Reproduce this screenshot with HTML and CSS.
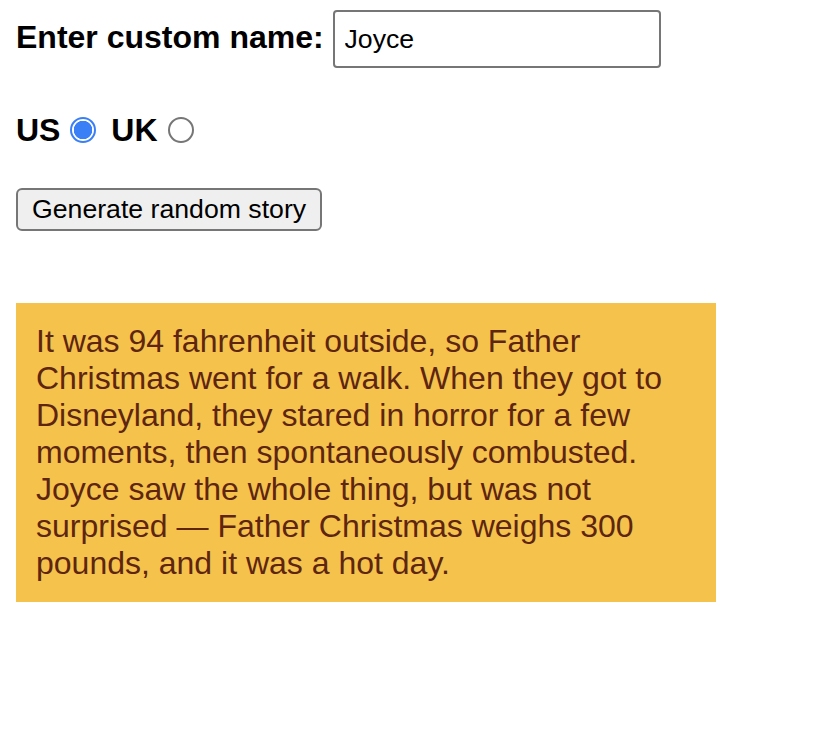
FILE: index.html
```html
<!DOCTYPE html>
<html lang="en">
<head>
<meta charset="utf-8">
<title>Silly story generator</title>
<link rel="stylesheet" href="styles.css">
</head>
<body>
<div class="row">
  <label class="lbl" for="customname">Enter custom name:</label>
  <input class="name-input" id="customname" type="text" value="Joyce">
</div>
<div class="row row-radios">
  <label class="lbl" for="us">US</label><input class="radio" id="us" type="radio" name="ukus" value="us" checked>
  <label class="lbl" for="uk">UK</label><input class="radio" id="uk" type="radio" name="ukus" value="uk">
</div>
<div class="row">
  <button class="randomize" type="button">Generate random story</button>
</div>
<p class="story">It was 94 fahrenheit outside, so Father Christmas went for a walk. When they got to Disneyland, they stared in horror for a few moments, then spontaneously combusted. Joyce saw the whole thing, but was not surprised — Father Christmas weighs 300 pounds, and it was a hot day.</p>
</body>
</html>
```
FILE: styles.css
```css
body {
  margin: 10px 16px 16px;
  width: 700px;
  font-family: "Liberation Sans", Helvetica, Arial, sans-serif;
  font-size: 32px;
  color: #000;
  background: #fff;
}

.row {
  padding-bottom: 40px;
}

.row-radios {
  padding-bottom: 39px;
}

.lbl {
  font-weight: bold;
}

.name-input {
  font-family: "Liberation Sans", Helvetica, Arial, sans-serif;
  font-size: 26.67px;
  padding: 11.5px 10px;
  width: 304px;
  border: 2px solid #767676;
  border-radius: 4px;
  color: #000;
  background: #fff;
  margin: 0;
}

.radio {
  appearance: none;
  -webkit-appearance: none;
  width: 26px;
  height: 26px;
  margin: 9px 6px 0 10px;
  border: 2px solid #767676;
  border-radius: 50%;
  background: #fff;
  box-sizing: border-box;
  vertical-align: -2px;
}

.radio:checked {
  border: 2px solid #3b7ff6;
  background: radial-gradient(circle, #3b7ff6 0 9px, #fff 9.5px);
}

.randomize {
  font-family: "Liberation Sans", Helvetica, Arial, sans-serif;
  font-size: 26.67px;
  padding: 4px 14px;
  border: 2px solid #767676;
  border-radius: 6px;
  background: #efefef;
  color: #000;
  margin: 0;
}

.story {
  background: #f5c24b;
  color: #5e2612;
  padding: 20px;
  margin: 32px 0;
  line-height: 37px;
}
```
